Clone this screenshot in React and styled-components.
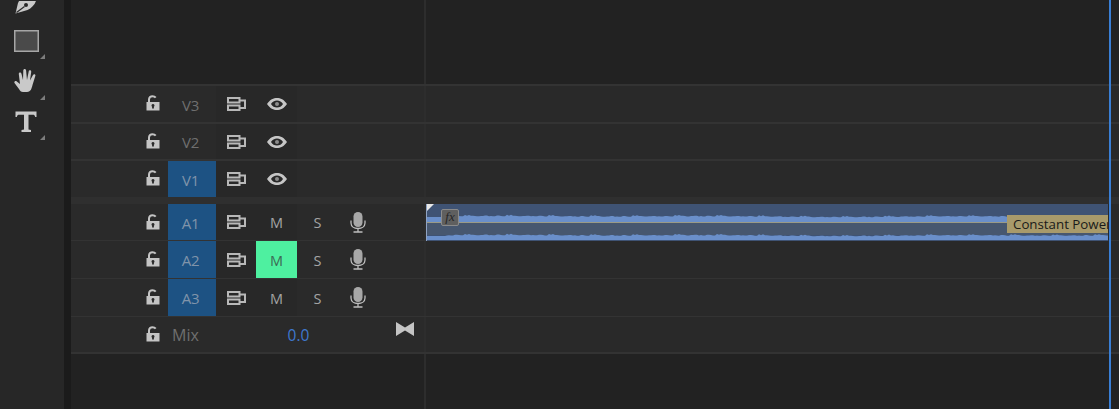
import React from 'react';
import styled, { createGlobalStyle } from 'styled-components';

const GlobalStyle = createGlobalStyle`
  html, body {
    margin: 0;
    padding: 0;
    background: #222222;
    overflow: hidden;
  }
`;

const Page = styled.div`
  position: relative;
  display: flex;
  width: 1119px;
  height: 409px;
  overflow: hidden;
  font-family: 'Open Sans', 'Liberation Sans', sans-serif;
`;

const ToolColumn = styled.div`
  width: 64px;
  flex: none;
  height: 100%;
  background: #272727;
  display: flex;
  flex-direction: column;
  align-items: flex-start;
`;

const ToolSlot = styled.div`
  position: relative;
  width: 52px;
  height: ${props => props.height}px;
  display: flex;
  justify-content: center;
  align-items: center;
  padding-top: ${props => props.top || 0}px;
  box-sizing: border-box;
`;

const Corner = styled.div`
  position: absolute;
  right: 7px;
  bottom: ${props => props.bottom}px;
  width: 0;
  height: 0;
  border-left: 5px solid transparent;
  border-bottom: 5px solid #7d7d7d;
`;

const Gutter = styled.div`
  width: 7px;
  flex: none;
  background: #1b1b1b;
`;

const Timeline = styled.div`
  flex: 1;
  display: flex;
  flex-direction: column;
  background: #222222;
`;

const Row = styled.div`
  display: flex;
  height: ${props => props.height}px;
  flex: none;
  box-sizing: border-box;
  border-bottom: ${props => props.line ? `${props.line}px solid #333333` : 'none'};
`;

const Header = styled.div`
  width: 353px;
  flex: none;
  display: flex;
  align-items: stretch;
  padding-left: 73px;
  box-sizing: border-box;
  background: ${props => props.plain ? 'transparent' : '#2a2a2a'};
`;

const Lane = styled.div`
  flex: 1;
  min-width: 0;
  border-left: 2px solid #2d2d2d;
  background: ${props => props.plain ? '#222222' : '#292929'};
`;

const Band = styled.div`
  height: 7px;
  flex: none;
  background: #2f2f2f;
`;

const Remainder = styled.div`
  flex: 1;
  display: flex;
`;

const LockCell = styled.div`
  width: 24px;
  flex: none;
  display: flex;
  justify-content: center;
  padding: ${props => props.top}px 6px 0 0;
  box-sizing: border-box;
`;

const TrackLabel = styled.div`
  width: 48px;
  flex: none;
  display: flex;
  align-items: center;
  justify-content: center;
  font-size: 15px;
  padding: 1px 3px 0 0;
  box-sizing: border-box;
  letter-spacing: -0.3px;
  color: ${props => props.active ? '#8094aa' : '#6f6f6f'};
  background: ${props => props.active ? '#1d5283' : 'transparent'};
`;

const ToggleCell = styled.div`
  width: ${props => props.width}px;
  flex: none;
  display: flex;
  align-items: center;
  justify-content: center;
  font-size: 14.5px;
  padding-top: ${props => props.letter ? 1 : 0}px;
  box-sizing: border-box;
  color: ${props => props.on ? '#3d6a55' : '#a4a4a4'};
  background: ${props => props.on ? '#4ef0a0' : props.plain ? 'transparent' : '#282828'};
`;

const MixName = styled.div`
  width: 48px;
  flex: none;
  padding-left: 4px;
  box-sizing: border-box;
  display: flex;
  align-items: center;
  font-size: 16px;
  color: #6f6f6f;
`;

const MixValue = styled.div`
  width: 165px;
  flex: none;
  display: flex;
  align-items: center;
  justify-content: center;
  font-size: 15.5px;
  color: #3f78cf;
`;

const MixIcon = styled.div`
  display: flex;
  align-items: flex-start;
  padding: 5px 0 0 15px;
  flex: none;
`;

const Clip = styled.div`
  position: relative;
  width: 682px;
  height: 37px;
  overflow: hidden;
  background: #3f5374;
  border-left: 1px solid #8fa3c4;
  box-sizing: border-box;
`;

const Wave = styled.svg`
  display: block;
`;

const ClipCorner = styled.div`
  position: absolute;
  left: 0;
  top: 0;
  width: 0;
  height: 0;
  border-top: 7px solid #e8e8e8;
  border-right: 7px solid transparent;
`;

const FxBadge = styled.div`
  position: absolute;
  left: 14px;
  top: 5px;
  width: 18px;
  height: 17px;
  box-sizing: border-box;
  border: 1px solid #8a8a8a;
  border-radius: 2px;
  background: #5f5f5f;
  color: #262626;
  font-family: 'Liberation Serif', serif;
  font-style: italic;
  font-size: 13px;
  line-height: 14px;
  text-align: center;
`;

const Transition = styled.div`
  position: absolute;
  left: 580px;
  top: 11px;
  width: 102px;
  height: 18px;
  background: #a89a6b;
  color: #1a1a1a;
  font-size: 13.3px;
  line-height: 18px;
  padding-left: 6px;
  box-sizing: border-box;
  white-space: nowrap;
  overflow: hidden;
`;

const Playhead = styled.div`
  position: absolute;
  left: 1109px;
  top: 0;
  width: 2px;
  height: 100%;
  background: #3a7fd5;
`;

const Lock = () => (
  <svg width="14" height="16" viewBox="0 0 14 16">
    <path d="M3 7.500V4.500C3 2.500 4.500 1.200 6.500 1.200c1.500 0 2.500.6 3.200 1.500" fill="none" stroke="#c4c4c4" strokeWidth="2" />
    <path fillRule="evenodd" fill="#c4c4c4" d="M0.500 7h13v8.500H.5zM7 9a1.500 1.500 0 0 0-.9 2.700V13.500h1.800v-1.800A1.500 1.500 0 0 0 7 9z" />
  </svg>
);

const Sync = () => (
  <svg width="19" height="14" viewBox="0 0 19 14" fill="none" stroke="#b8b8b8" strokeWidth="2">
    <rect x="1" y="1" width="11.500" height="4.500" />
    <rect x="1" y="8.500" width="11.500" height="4.500" />
    <path d="M12.500 3.500H18v7.500h-5.500" />
  </svg>
);

const Eye = () => (
  <svg width="20" height="12" viewBox="0 0 20 12">
    <path fillRule="evenodd" fill="#c6c6c6" d="M0 6C3 1.500 6.500 0 10 0s7 1.500 10 6c-3 4.500-6.500 6-10 6S3 10.500 0 6zm10-3.600C7.600 2.400 5.200 3.700 4 6c1.200 2.300 3.600 3.600 6 3.600s4.800-1.300 6-3.600c-1.200-2.300-3.600-3.600-6-3.600z" />
    <circle cx="10" cy="6" r="2" fill="#8c8c8c" />
  </svg>
);

const Mic = () => (
  <svg width="16" height="21" viewBox="0 0 16 21" fill="none">
    <rect x="3.500" y="0" width="9" height="15" rx="4.500" fill="#a8a8a8" />
    <path d="M1 8.500v2.500c0 3.400 3 5.500 7 5.500s7-2.100 7-5.500V8.500M8 16.500v3M3.500 20h9" stroke="#bdbdbd" strokeWidth="1.300" />
  </svg>
);

const Bowtie = () => (
  <svg width="18" height="14" viewBox="0 0 18 14">
    <path d="M0 0l9 5.500L18 0v14L9 8.500 0 14z" fill="#c4c4c4" />
  </svg>
);

const Pen = () => (
  <svg width="22" height="13" viewBox="0 0 22 13">
    <path fillRule="evenodd" fill="#c9c9c9" d="M0.500 12.500L3 2C4 0 4.500 -1 5 -2H21.500C20.500 3 17 7 12.500 9zM11 2a2 2 0 1 0 0 4 2 2 0 0 0 0-4z" />
    <path d="M1.500 11.500L9.500 5.500" stroke="#272727" strokeWidth="1.200" />
  </svg>
);

const Rect = () => (
  <svg width="25" height="22" viewBox="0 0 25 22">
    <rect x="0.750" y="0.750" width="23.500" height="20.500" fill="#4a4a4a" stroke="#a6a6a6" strokeWidth="1.500" />
  </svg>
);

const Hand = () => (
  <svg width="24" height="25" viewBox="0 0 24 25">
    <path fill="#c9c9c9" d="M9 24c-2 0-3-1-4-3L0.500 15c-.8-1.300 1-2.800 2.300-1.500L6 16 4.800 6c-.2-1.800 2.200-2.200 2.600-.4L9 12 9.300 2.500c0-2 2.700-2 2.800 0L13 12l1.700-8.500c.4-1.800 2.800-1.300 2.500.5L16 12.500l3-5.500c.9-1.500 3-.6 2.300 1L18.500 17c-.8 3-1.500 7-5.500 7z" />
  </svg>
);

const TypeT = () => (
  <svg width="22" height="21" viewBox="0 0 22 21">
    <path fill="#c9c9c9" d="M0.500 0.500h21V6h-1.300c-.3-1.800-1-2.300-2.500-2.300h-4.200v14.800l2.500.6V21H6.500v-1.900l2.500-.6V3.700H4.300C2.800 3.700 2.100 4.200 1.800 6H.5z" />
  </svg>
);

// seeded so the waveform stays the same on every render
const buildBand = (base, edge) => {
  const pts = [];
  let seed = 11;
  for (let x = 0; x <= 682; x += 2) {
    seed = (seed * 73 + 41) % 211;
    const slow = Math.sin(x / 37) + Math.sin(x / 91);
    const peak = x < 20 ? 0 : 0.3 + slow * 0.3 + (seed % 7 === 0 ? 1.4 : (seed % 3) * 0.3);
    pts.push([x, base - peak]);
  }
  return `M0 ${edge}L${pts.map(p => p.join(' ')).join('L')}L682 ${edge}Z`;
};

const ClipWave = () => (
  <Wave width="682" height="37" viewBox="0 0 682 37">
    <rect x="0" y="19" width="682" height="12" fill="#47576f" />
    <path d={buildBand(13, 19)} fill="#6a8fca" />
    <rect x="0" y="18" width="682" height="1" fill="#9a9a86" />
    <path d={buildBand(32, 36)} fill="#6a8fca" />
  </Wave>
);

const videoTracks = [
  { name: 'V3', height: 38 },
  { name: 'V2', height: 37 },
  { name: 'V1', height: 36, active: true, noLine: true },
];

const audioTracks = [
  { name: 'A1', height: 37, clip: true },
  { name: 'A2', height: 38, muted: true },
  { name: 'A3', height: 38 },
];

const App = () => (
  <Page>
    <GlobalStyle />
    <ToolColumn>
      <ToolSlot height={15}><Pen /></ToolSlot>
      <ToolSlot height={45} top={7}><Rect /><Corner bottom={1} /></ToolSlot>
      <ToolSlot height={41}><Hand /><Corner bottom={1} /></ToolSlot>
      <ToolSlot height={41}><TypeT /><Corner bottom={2} /></ToolSlot>
    </ToolColumn>
    <Gutter />
    <Timeline>
      <Row height={86} line={2}>
        <Header plain />
        <Lane plain />
      </Row>
      {videoTracks.map(track => (
        <Row key={track.name} height={track.height} line={track.noLine ? 0 : 2}>
          <Header>
            <LockCell top={9}><Lock /></LockCell>
            <TrackLabel active={track.active}>{track.name}</TrackLabel>
            <ToggleCell width={40}><Sync /></ToggleCell>
            <ToggleCell width={41}><Eye /></ToggleCell>
          </Header>
          <Lane />
        </Row>
      ))}
      <Band />
      {audioTracks.map(track => (
        <Row key={track.name} height={track.height} line={1}>
          <Header>
            <LockCell top={10}><Lock /></LockCell>
            <TrackLabel active>{track.name}</TrackLabel>
            <ToggleCell width={40}><Sync /></ToggleCell>
            <ToggleCell width={41} letter on={track.muted}>M</ToggleCell>
            <ToggleCell width={41} letter plain>S</ToggleCell>
            <ToggleCell width={39} plain><Mic /></ToggleCell>
          </Header>
          <Lane>
            {track.clip && (
              <Clip>
                <ClipWave />
                <ClipCorner />
                <FxBadge>fx</FxBadge>
                <Transition>Constant Power</Transition>
              </Clip>
            )}
          </Lane>
        </Row>
      ))}
      <Row height={37} line={2}>
        <Header>
          <LockCell top={9}><Lock /></LockCell>
          <MixName>Mix</MixName>
          <MixValue>0.0</MixValue>
          <MixIcon><Bowtie /></MixIcon>
        </Header>
        <Lane />
      </Row>
      <Remainder>
        <Header plain />
        <Lane plain />
      </Remainder>
    </Timeline>
    <Playhead />
  </Page>
);

export default App;
